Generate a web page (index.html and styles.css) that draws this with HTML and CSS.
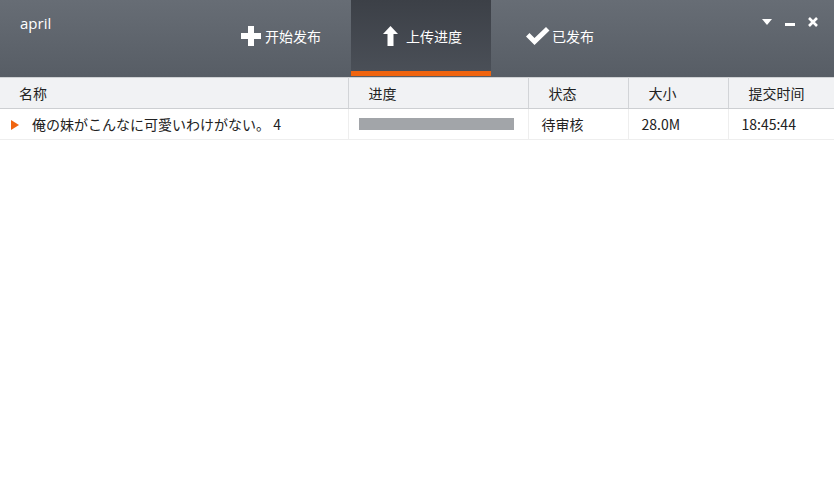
FILE: index.html
```html
<!DOCTYPE html>
<html lang="zh-CN">
<head>
    <meta charset="UTF-8">
    <title>april</title>
    <link rel="stylesheet" href="styles.css">
</head>
<body>
    <div class="header">
        <div class="user">april</div>
        <div class="tabs">
            <div class="tab">
                <svg class="icon" width="20" height="20" viewBox="0 0 20 20"><path d="M7 0h6v7h7v6h-7v7H7v-7H0V7h7z" fill="#fff"/></svg>
                <span>开始发布</span>
            </div>
            <div class="tab active">
                <svg class="icon" width="15" height="20" viewBox="0 0 15 20"><path d="M7.5 0L15 8H10.5V20H4.5V8H0z" fill="#fff"/></svg>
                <span>上传进度</span>
            </div>
            <div class="tab">
                <svg class="icon" width="24" height="20" viewBox="0 0 24 20"><path d="M0 10.5l3.5-3.5 5 5L20 1l3.5 3.5L8.5 19z" fill="#fff"/></svg>
                <span>已发布</span>
            </div>
        </div>
        <div class="controls">
            <svg width="10" height="6" viewBox="0 0 10 6"><path d="M0 0h10L5 6z" fill="#fff"/></svg>
            <svg width="10" height="10" viewBox="0 0 10 10"><rect x="0" y="6" width="10" height="3" fill="#fff"/></svg>
            <svg width="10" height="10" viewBox="0 0 10 10"><path d="M1 1l8 8M9 1L1 9" stroke="#fff" stroke-width="2.6"/></svg>
        </div>
    </div>

    <table class="list">
        <thead>
            <tr>
                <th class="col-name">名称</th>
                <th class="col-progress">进度</th>
                <th class="col-status">状态</th>
                <th class="col-size">大小</th>
                <th class="col-time">提交时间</th>
            </tr>
        </thead>
        <tbody>
            <tr>
                <td class="col-name"><span class="arrow"></span>俺の妹がこんなに可愛いわけがない。 4</td>
                <td class="col-progress"><div class="bar"></div></td>
                <td class="col-status">待审核</td>
                <td class="col-size">28.0M</td>
                <td class="col-time">18:45:44</td>
            </tr>
        </tbody>
    </table>
</body>
</html>
```

FILE: styles.css
```css
* {
    margin: 0;
    padding: 0;
    box-sizing: border-box;
}

body {
    font-family: "Noto Sans CJK SC", "Liberation Sans", sans-serif;
    font-size: 14px;
    color: #222;
    background: #fff;
    width: 834px;
    height: 498px;
    overflow: hidden;
}

.header {
    height: 77px;
    display: flex;
    background: linear-gradient(#676d75, #575d65);
    color: #fff;
}

.user {
    width: 222px;
    padding: 13px 0 0 20px;
    font-size: 15px;
    font-family: "Open Sans", "Liberation Sans", sans-serif;
}

.tabs {
    display: flex;
}

.tab {
    width: 140px;
    display: flex;
    align-items: center;
    gap: 4px;
    padding: 0 0 0 19px;
    border-bottom: 5px solid transparent;
    margin-bottom: 1px;
}

.tab:first-child {
    width: 129px;
}

.tab.active {
    background: linear-gradient(#3c4047, #4a4f57);
    border-bottom-color: #f0640f;
    padding-left: 32px;
    gap: 8px;
}

.tab:last-child {
    padding-left: 35px;
    gap: 2px;
}

.icon {
    display: block;
    margin-top: 1px;
}

.controls {
    margin-left: auto;
    display: flex;
    gap: 13px;
    padding: 17px 16px 0 0;
    align-items: flex-start;
}

.controls svg {
    display: block;
}

.controls svg:first-child {
    margin-top: 2px;
}

.list {
    width: 100%;
    border-collapse: collapse;
    table-layout: fixed;
    border-top: 1px solid #cfd1d4;
}

.list th {
    height: 31px;
    background: #f1f2f4;
    font-weight: normal;
    text-align: left;
    border-bottom: 1px solid #cdcfd2;
    border-left: 1px solid #d2d4d7;
    padding-left: 20px;
}

.list td {
    height: 31px;
    text-align: left;
    border-bottom: 1px solid #eeeeee;
    border-left: 1px solid #eeeeee;
    padding-left: 13px;
}

.list th:first-child,
.list td:first-child {
    border-left: none;
}

.list th.col-name {
    padding-left: 19px;
}

.col-name { width: 348px; }
.col-progress { width: 180px; }
.col-status { width: 100px; }
.col-size { width: 100px; }

.list td.col-name {
    padding-left: 11px;
}

.list td.col-progress {
    padding-left: 10px;
}

.arrow {
    display: inline-block;
    width: 0;
    height: 0;
    border-left: 8px solid #f0640f;
    border-top: 5px solid transparent;
    border-bottom: 5px solid transparent;
    margin-right: 13px;
}

.bar {
    width: 155px;
    height: 12px;
    background: #a2a5a9;
}
```
